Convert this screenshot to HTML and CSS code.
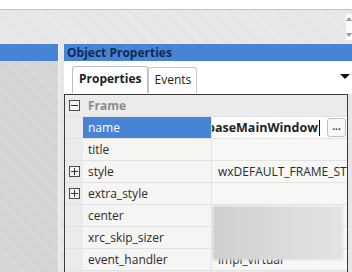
FILE: index.html
```html
<!DOCTYPE html>
<html>
<head>
<meta charset="utf-8">
<link rel="stylesheet" href="styles.css">
</head>
<body>
<div class="top"></div>
<div class="toolbar">
  <div class="spin"><span class="up"></span><span class="down"></span></div>
</div>
<div class="main">
  <div class="left">
    <div class="cap"></div>
    <div class="leftbody"></div>
  </div>
  <div class="right">
    <div class="cap title">Object Properties</div>
    <div class="tabbar">
      <div class="tab active">Properties</div>
      <div class="tab">Events</div>
      <div class="dropdown"></div>
    </div>
    <div class="gridwrap">
      <div class="grid">
        <div class="row cat">
          <div class="margin"><span class="box minus"></span></div>
          <div class="catname">Frame</div>
        </div>
        <div class="row">
          <div class="margin"></div>
          <div class="name sel">name</div>
          <div class="value edit"><span class="edittext">baseMainWindow</span><span class="caret"></span><span class="dots">...</span></div>
        </div>
        <div class="row">
          <div class="margin"></div>
          <div class="name">title</div>
          <div class="value"></div>
        </div>
        <div class="row">
          <div class="margin"><span class="box plus"></span></div>
          <div class="name">style</div>
          <div class="value">wxDEFAULT_FRAME_STYLE</div>
        </div>
        <div class="row">
          <div class="margin"><span class="box plus"></span></div>
          <div class="name">extra_style</div>
          <div class="value"></div>
        </div>
        <div class="row">
          <div class="margin"></div>
          <div class="name">center</div>
          <div class="value"></div>
        </div>
        <div class="row">
          <div class="margin"></div>
          <div class="name">xrc_skip_sizer</div>
          <div class="value"></div>
        </div>
        <div class="row">
          <div class="margin"></div>
          <div class="name">event_handler</div>
          <div class="value">impl_virtual</div>
        </div>
        <div class="redact"></div>
      </div>
      <div class="rightedge"></div>
    </div>
  </div>
</div>
</body>
</html>
```
FILE: styles.css
```css
html, body {
  margin: 0;
  padding: 0;
}
body {
  width: 352px;
  height: 272px;
  overflow: hidden;
  font-family: "Open Sans", "Noto Sans", sans-serif;
  background: repeating-linear-gradient(45deg, #ebebeb 0 1px, #e3e3e3 1px 2px);
}
.top {
  height: 9px;
  background: #ffffff;
  border-bottom: 1px solid #c4c4c4;
}
.toolbar {
  height: 34px;
  display: flex;
  justify-content: flex-end;
  align-items: center;
}
.spin {
  width: 6px;
  height: 26px;
  display: flex;
  flex-direction: column;
  justify-content: space-between;
  align-items: center;
  background: #fafafa;
  padding: 3px 0;
  box-sizing: border-box;
}
.spin .up {
  border-left: 3px solid transparent;
  border-right: 3px solid transparent;
  border-bottom: 4px solid #9a9a9a;
}
.spin .down {
  border-left: 3px solid transparent;
  border-right: 3px solid transparent;
  border-top: 4px solid #9a9a9a;
}
.main {
  display: flex;
  height: 228px;
}
.cap {
  height: 17px;
  background: #4884d6;
}
.left {
  width: 58px;
  display: flex;
  flex-direction: column;
  border-right: 1px solid #f4f4f4;
}
.leftbody {
  flex: 1;
  background: repeating-linear-gradient(45deg, #d9d9d9 0 1px, #d2d2d2 1px 2px);
}
.right {
  margin-left: 5px;
  flex: 1;
  display: flex;
  flex-direction: column;
  background: #ffffff;
}
.title {
  font-weight: bold;
  font-size: 12px;
  color: #14284f;
  line-height: 17px;
  padding-left: 3px;
}
.tabbar {
  height: 33px;
  display: flex;
  align-items: flex-end;
  padding-left: 8px;
  position: relative;
  box-sizing: border-box;
  padding-bottom: 1px;
}
.tab {
  height: 26px;
  box-sizing: border-box;
  border: 1px solid #c8c8c8;
  border-bottom: none;
  border-radius: 3px 3px 0 0;
  font-size: 12px;
  line-height: 24px;
  padding: 0 5px;
  color: #222;
  background: #fff;
}
.tab.active {
  height: 27px;
  font-weight: bold;
  padding: 0 6px;
  border-color: #bdbdbd;
}
.dropdown {
  position: absolute;
  right: 2px;
  top: 13px;
  border-left: 5px solid transparent;
  border-right: 5px solid transparent;
  border-top: 5px solid #111;
}
.gridwrap {
  flex: 1;
  display: flex;
  background: #e2e2e2;
}
.grid {
  position: relative;
  flex: 0 0 282px;
  border: 1px solid #3a3a3a;
  border-bottom: none;
  background: #ececec;
  overflow: hidden;
}
.rightedge {
  flex: 1;
  background: #e6e6e6;
}
.row {
  display: flex;
  height: 21px;
  border-bottom: 1px solid #e2e2e2;
  font-size: 12px;
  line-height: 21px;
  color: #2a2a2a;
}
.margin {
  width: 18px;
  flex: none;
  background: #ebebeb;
  display: flex;
  align-items: center;
  justify-content: center;
}
.box {
  width: 9px;
  height: 9px;
  border: 1px solid #4a4a4a;
  position: relative;
  box-sizing: content-box;
  background: #f4f4f4;
}
.box::before {
  content: "";
  position: absolute;
  left: 1px;
  right: 1px;
  top: 4px;
  height: 1px;
  background: #333;
}
.box.plus::after {
  content: "";
  position: absolute;
  top: 1px;
  bottom: 1px;
  left: 4px;
  width: 1px;
  background: #333;
}
.cat .catname {
  flex: 1;
  font-weight: bold;
  color: #8c8c8c;
  padding-left: 5px;
  background: #ebebeb;
}
.name {
  width: 123px;
  flex: none;
  padding-left: 5px;
  background: #f5f5f3;
  border-right: 1px solid #e2e2e2;
  white-space: nowrap;
  overflow: hidden;
}
.name.sel {
  background: #4884d6;
  color: #ffffff;
}
.value {
  flex: 1;
  background: #f7f7f6;
  padding-left: 6px;
  white-space: nowrap;
  overflow: hidden;
}
.value.edit {
  background: #ffffff;
  padding-left: 0;
  display: flex;
  align-items: center;
  position: relative;
}
.edittext {
  font-weight: bold;
  font-size: 12.5px;
  color: #222;
  margin-left: -5px;
}
.caret {
  width: 1px;
  height: 16px;
  background: #111;
  margin-left: 1px;
  flex: none;
}
.dots {
  margin-left: auto;
  margin-right: 1px;
  width: 19px;
  height: 19px;
  flex: none;
  box-sizing: border-box;
  border: 1px solid #c0c0c0;
  border-radius: 3px;
  background: #f8f8f8;
  font-size: 10px;
  font-weight: bold;
  line-height: 14px;
  text-align: center;
  color: #333;
}
.redact {
  position: absolute;
  left: 148px;
  top: 111px;
  width: 130px;
  height: 54px;
  background: linear-gradient(to right, #cfcfcf, #dadada 50%, #e3e3e3);
  filter: blur(1px);
}
```
